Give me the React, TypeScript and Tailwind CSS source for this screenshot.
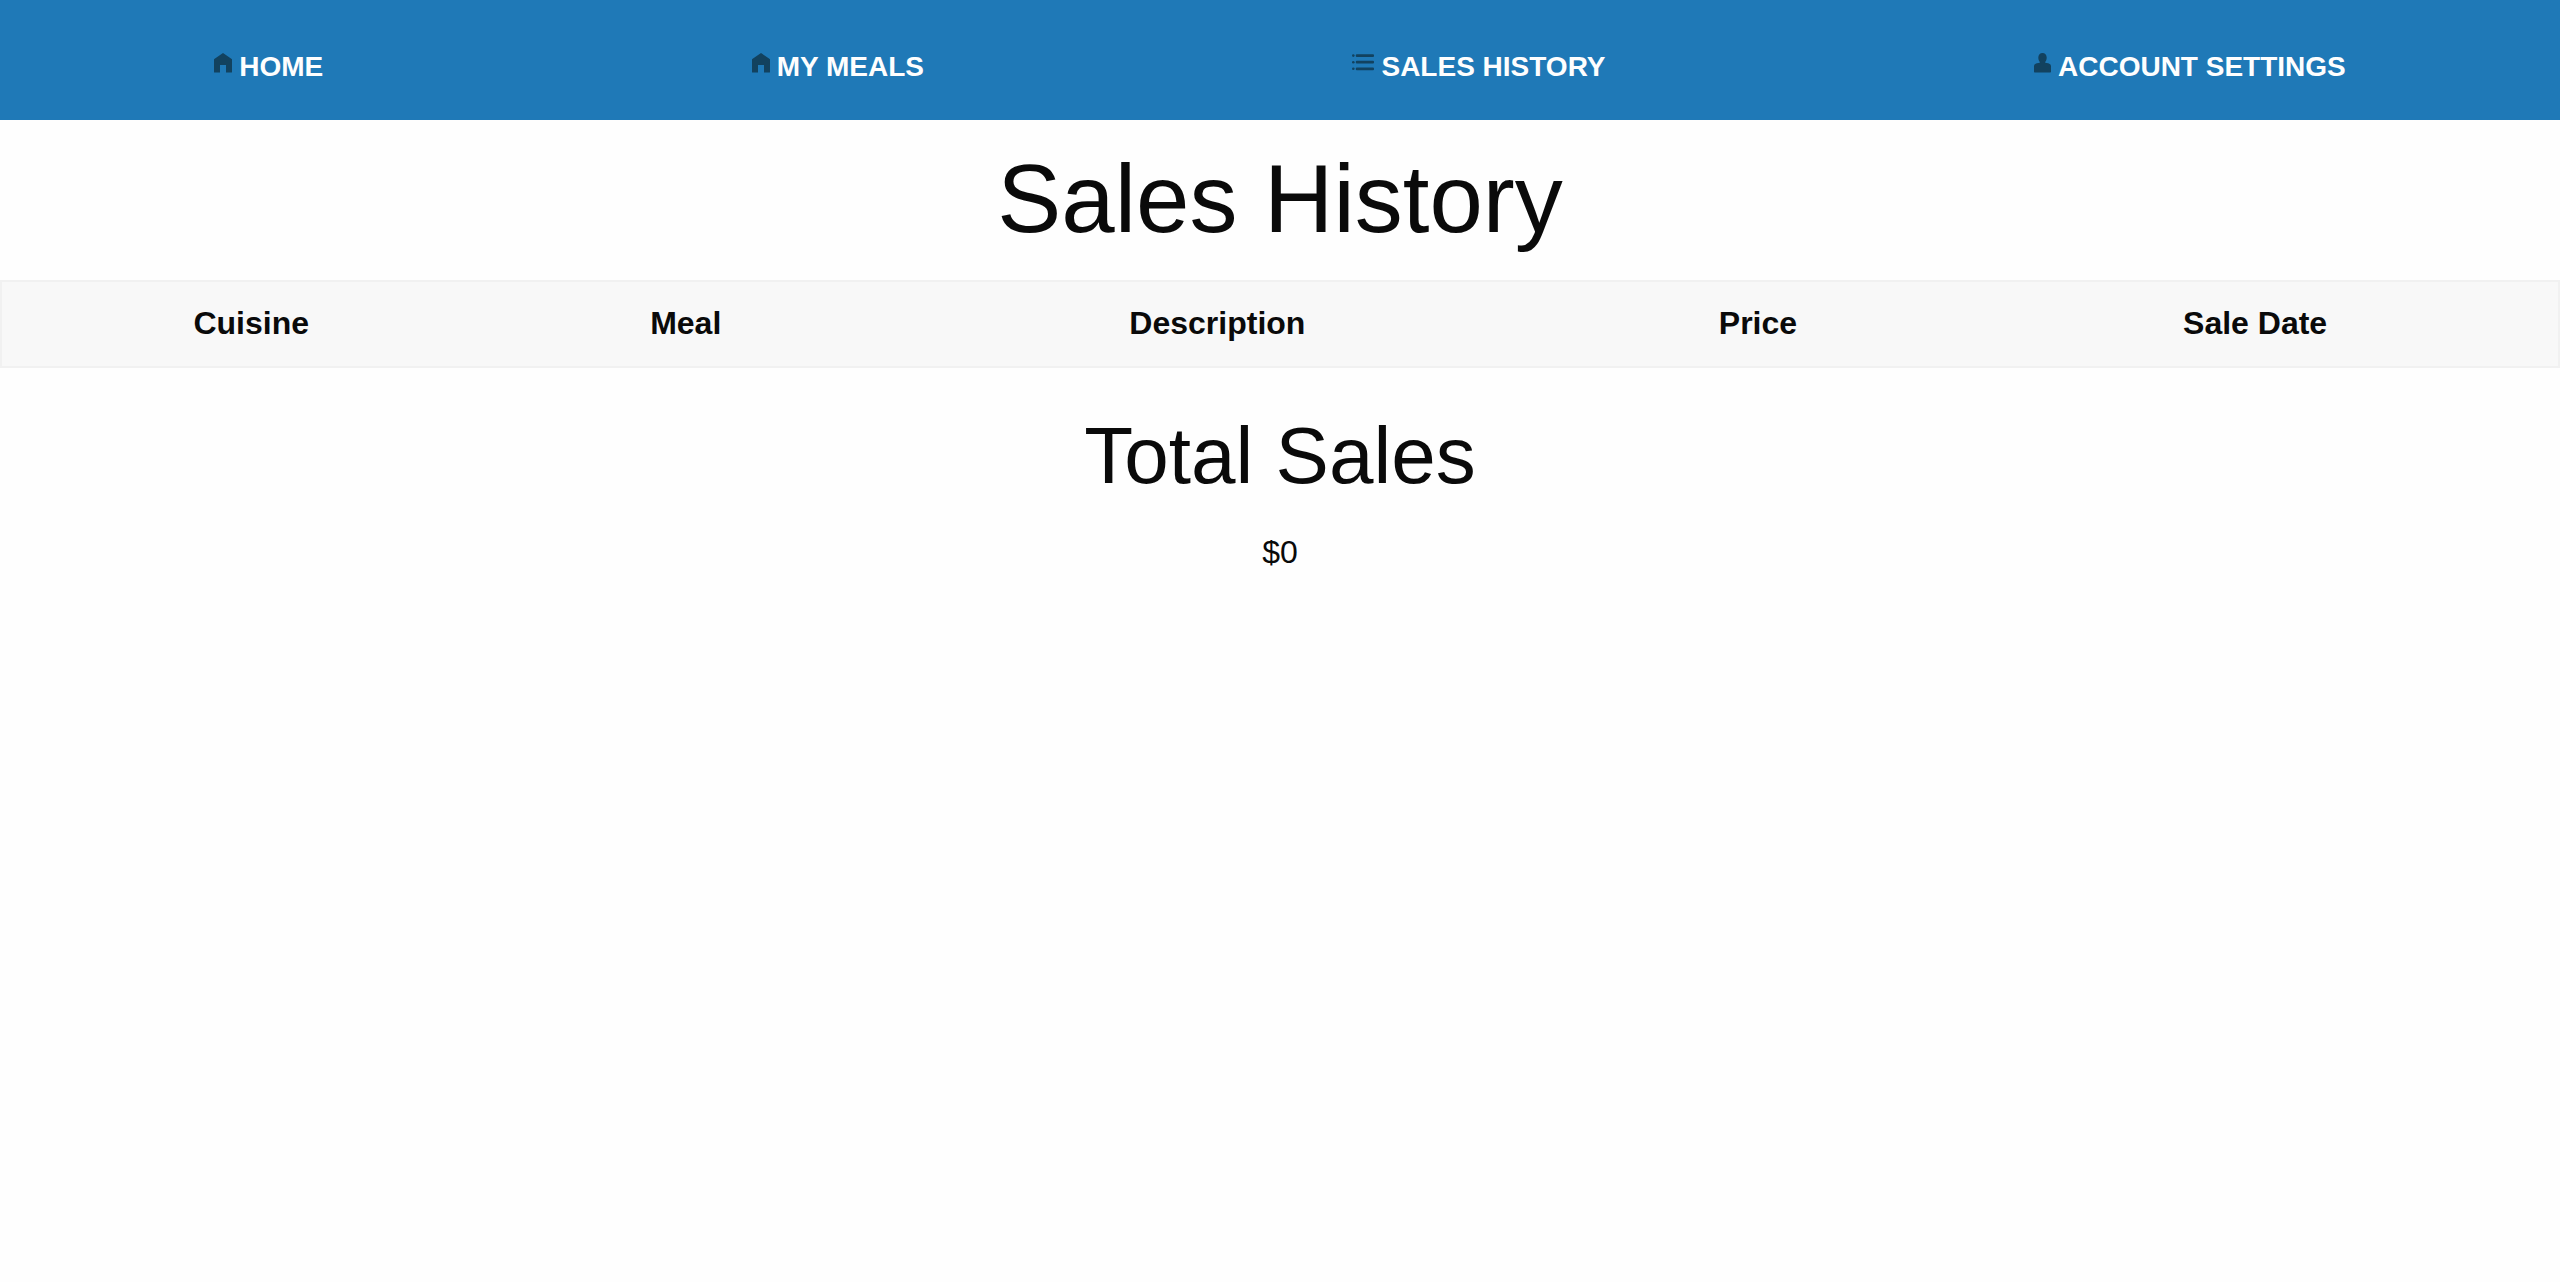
import type { ReactNode } from "react";

function HomeIcon() {
  return (
    <svg aria-hidden="true" width="18" height="20" viewBox="0 0 18 20" fill="currentColor">
      <path d="M9 0 17.700 5.900q.3.200.3.600V19q0 .5-.5.500H12V12H6v7.500H.5q-.5 0-.5-.5V6.500q0-.4.3-.6Z" />
    </svg>
  );
}

function ListIcon() {
  return (
    <svg aria-hidden="true" width="22" height="20" viewBox="0 0 22 20" fill="currentColor">
      <circle cx="1.3" cy="2.6" r="1.3" />
      <circle cx="1.3" cy="9.2" r="1.3" />
      <circle cx="1.3" cy="15.8" r="1.3" />
      <rect x="3.8" y="1.2" width="18.2" height="2.8" rx="1" />
      <rect x="3.8" y="7.8" width="18.2" height="2.8" rx="1" />
      <rect x="3.8" y="14.4" width="18.2" height="2.8" rx="1" />
    </svg>
  );
}

function PersonIcon() {
  return (
    <svg aria-hidden="true" width="17" height="20" viewBox="0 0 17 20" fill="currentColor">
      <path d="M8.5 0C11 0 12.700 1.900 12.700 4.500c0 1.900-.7 3.700-1.700 4.700.2.500.7.700 1.500.8 2.600.3 4.500 1 4.500 3.200v5.600q0 .7-.7.700H.7q-.7 0-.7-.7v-5.600C0 11 1.900 10.300 4.500 10c.8-.1 1.300-.3 1.500-.8-1-1-1.700-2.800-1.700-4.700C4.300 1.900 6 0 8.500 0Z" />
    </svg>
  );
}

const links: { label: string; icon: ReactNode }[] = [
  { label: "HOME", icon: <HomeIcon /> },
  { label: "MY MEALS", icon: <HomeIcon /> },
  { label: "SALES HISTORY", icon: <ListIcon /> },
  { label: "ACCOUNT SETTINGS", icon: <PersonIcon /> },
];

const columns = [
  { name: "Cuisine", width: "w-[19.5%]" },
  { name: "Meal", width: "w-[14.5%]" },
  { name: "Description", width: "w-[27.1%]" },
  { name: "Price", width: "w-[15.2%]" },
  { name: "Sale Date", width: "w-[23.7%]" },
];

export default function App() {
  return (
    <div className="min-h-screen bg-[#fefefe] font-['Liberation_Sans',Arial,sans-serif] text-[32px] leading-[48px] text-[#0a0a0a]">
      <nav className="bg-[#1f79b7] pt-[45px] pb-[31px]">
        <ul className="flex justify-around">
          {links.map(({ label, icon }) => (
            <li key={label}>
              <a href="#" className="flex items-start gap-[7px] text-[28px] leading-11 font-bold text-[#fefefe]">
                <span className="pt-2 text-[#12425f]">{icon}</span>
                {label}
              </a>
            </li>
          ))}
        </ul>
      </nav>
      <main className="text-center">
        <h1 className="pt-3 pb-3.5 text-[96px] leading-[134px]">Sales History</h1>
        <table className="w-full table-fixed border-separate border-spacing-0 border-2 border-[#f1f1f1] bg-[#f8f8f8]">
          <thead>
            <tr>
              {columns.map(({ name, width }) => (
                <th key={name} scope="col" className={`${width} px-5 pt-[17px] pb-[19px] font-bold`}>
                  {name}
                </th>
              ))}
            </tr>
          </thead>
        </table>
        <h2 className="mt-8 mb-4 text-[80px] leading-[112px]">Total Sales</h2>
        <p>$0</p>
      </main>
    </div>
  );
}
